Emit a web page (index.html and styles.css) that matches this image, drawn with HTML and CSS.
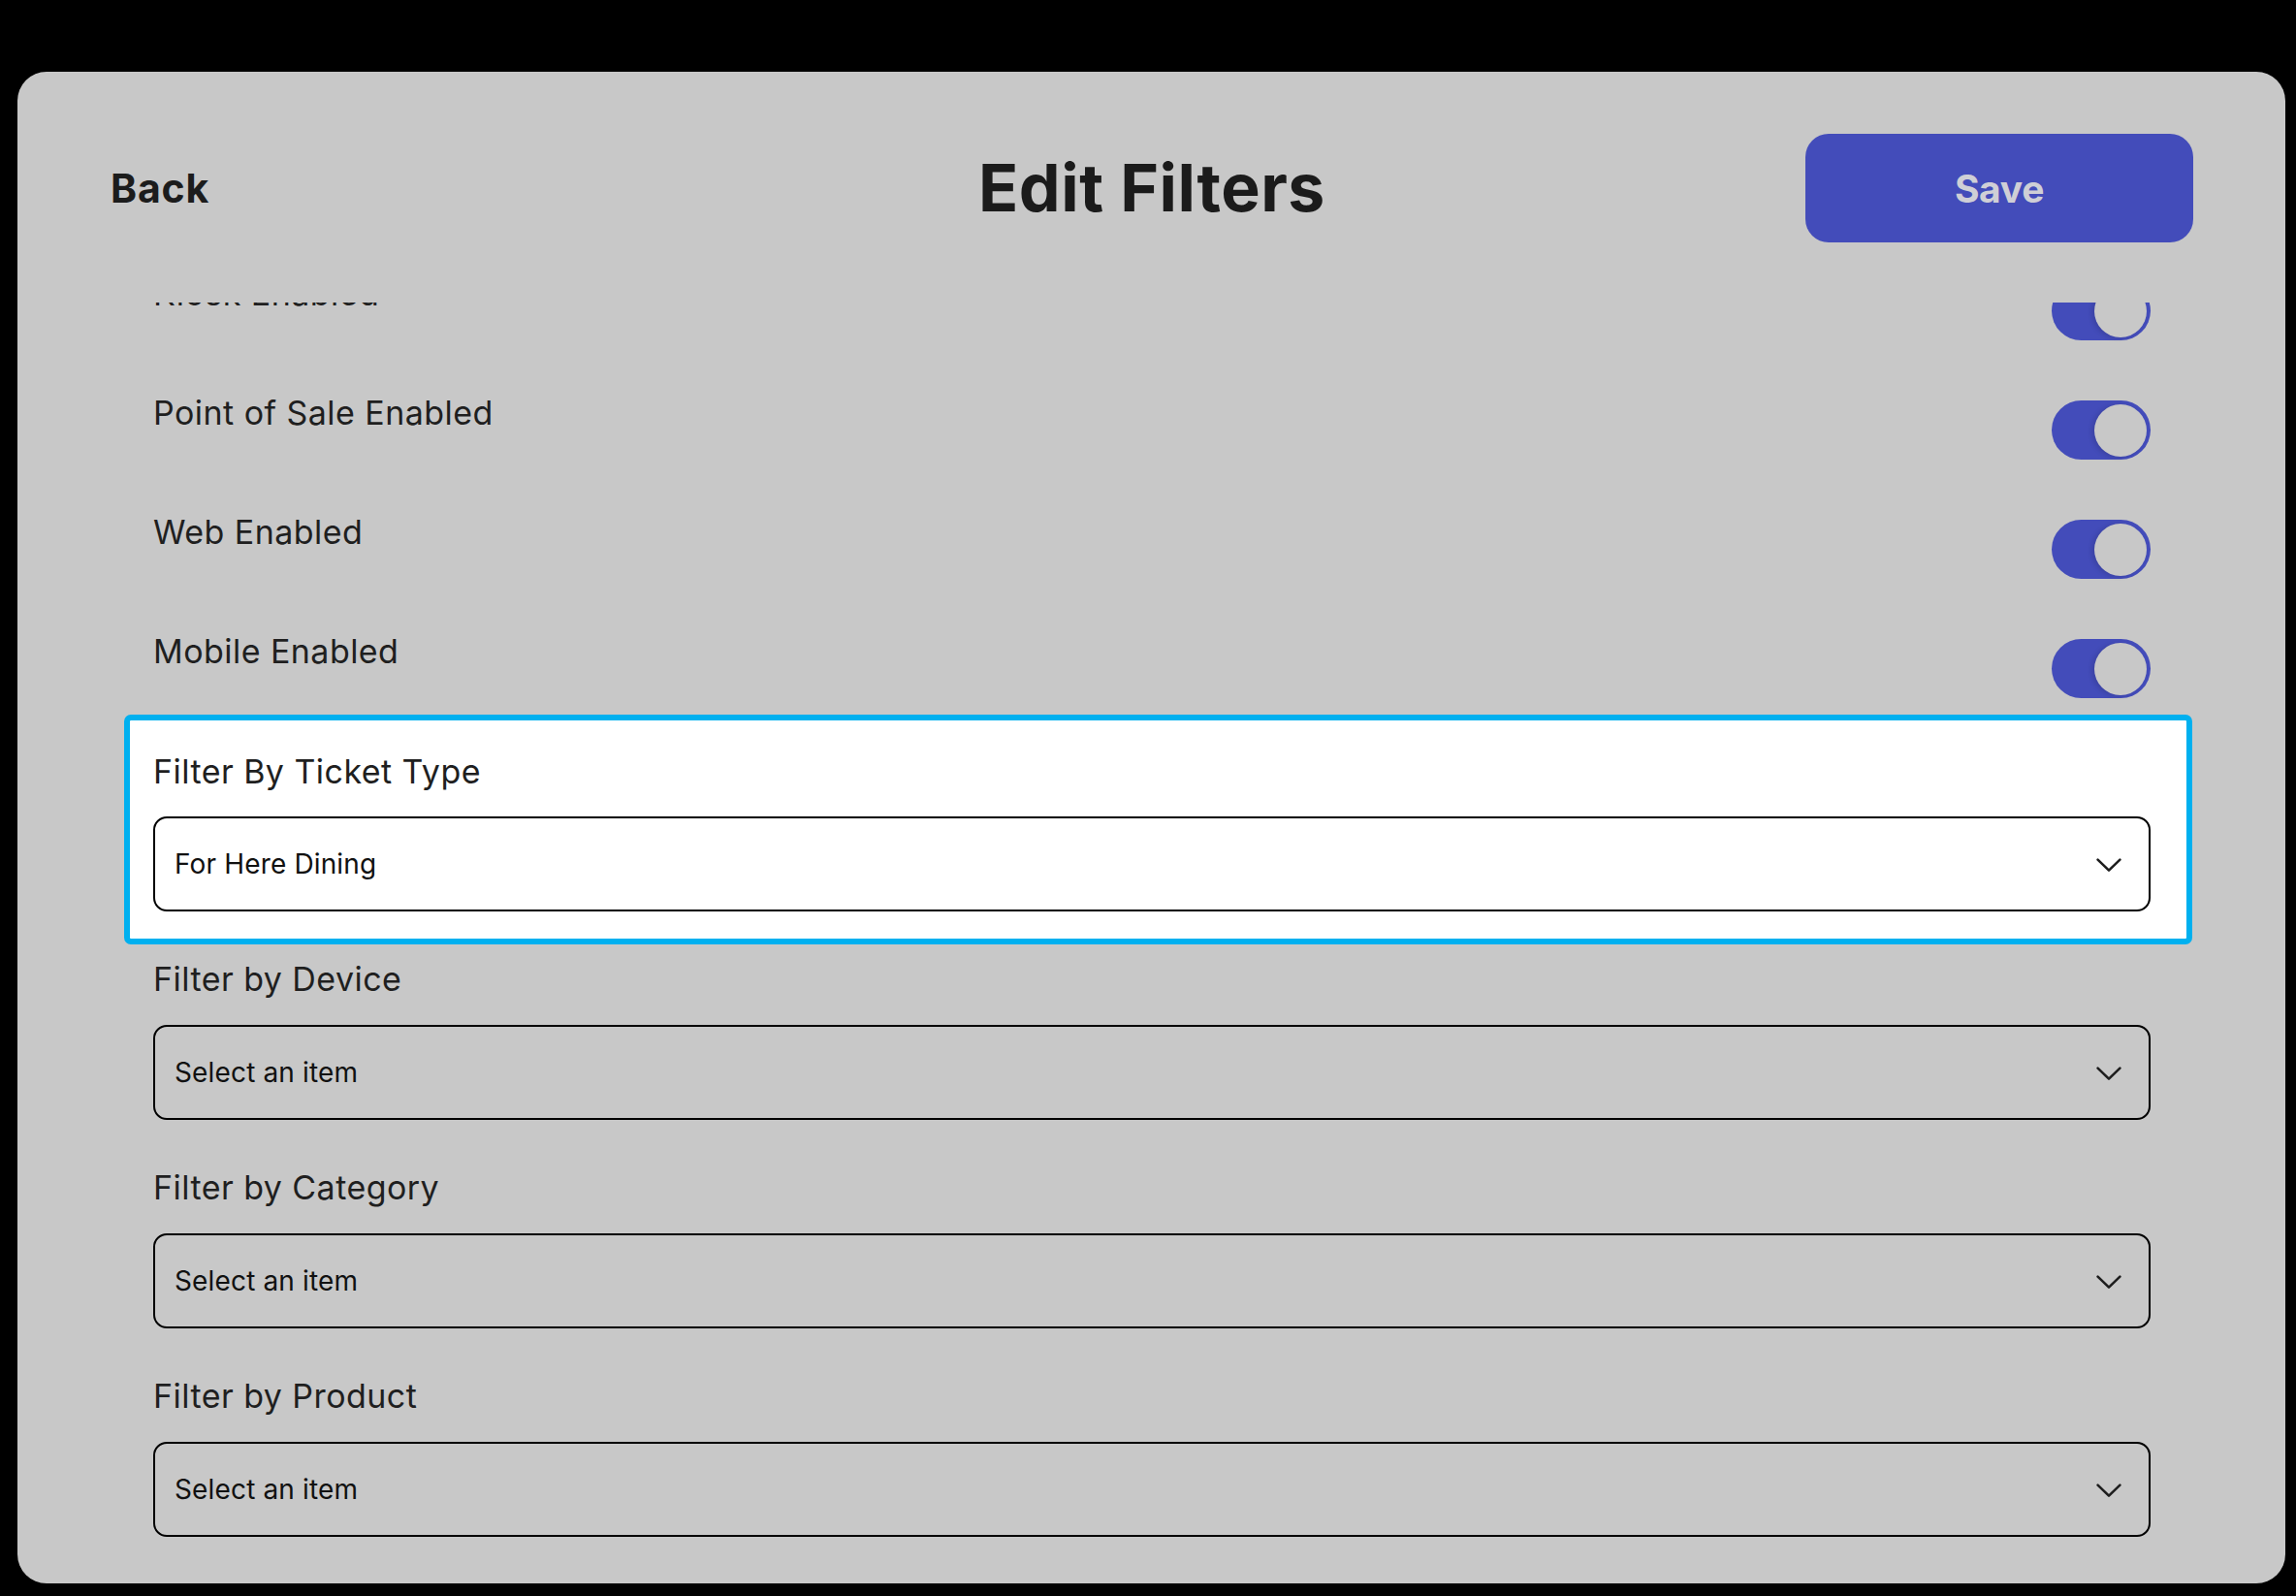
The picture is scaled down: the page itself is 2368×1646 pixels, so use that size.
FILE: index.html
```html
<!DOCTYPE html>
<html lang="en">
<head>
<meta charset="utf-8">
<title>Edit Filters</title>
<link rel="stylesheet" href="styles.css">
</head>
<body>
<div class="panel">
  <header class="header">
    <button class="back">Back</button>
    <h1 class="title">Edit Filters</h1>
    <button class="save">Save</button>
  </header>
  <div class="scroll">
    <div class="content">
      <div class="toggle-row">
        <span class="row-label">Kiosk Enabled</span>
        <span class="switch"><span class="knob"></span></span>
      </div>
      <div class="toggle-row">
        <span class="row-label">Point of Sale Enabled</span>
        <span class="switch"><span class="knob"></span></span>
      </div>
      <div class="toggle-row">
        <span class="row-label">Web Enabled</span>
        <span class="switch"><span class="knob"></span></span>
      </div>
      <div class="toggle-row toggle-row--last">
        <span class="row-label">Mobile Enabled</span>
        <span class="switch"><span class="knob"></span></span>
      </div>

      <div class="filter filter--active">
        <div class="filter-label">Filter By Ticket Type</div>
        <div class="select">
          <span class="select-text">For Here Dining</span>
          <svg class="chevron" viewBox="0 0 26 15" width="26" height="15"><path d="M1.6 1.6 L13 12.6 L24.4 1.6"/></svg>
        </div>
      </div>

      <div class="filter">
        <div class="filter-label">Filter by Device</div>
        <div class="select">
          <span class="select-text">Select an item</span>
          <svg class="chevron" viewBox="0 0 26 15" width="26" height="15"><path d="M1.6 1.6 L13 12.6 L24.4 1.6"/></svg>
        </div>
      </div>

      <div class="filter">
        <div class="filter-label">Filter by Category</div>
        <div class="select">
          <span class="select-text">Select an item</span>
          <svg class="chevron" viewBox="0 0 26 15" width="26" height="15"><path d="M1.6 1.6 L13 12.6 L24.4 1.6"/></svg>
        </div>
      </div>

      <div class="filter">
        <div class="filter-label">Filter by Product</div>
        <div class="select">
          <span class="select-text">Select an item</span>
          <svg class="chevron" viewBox="0 0 26 15" width="26" height="15"><path d="M1.6 1.6 L13 12.6 L24.4 1.6"/></svg>
        </div>
      </div>
    </div>
  </div>
</div>
</body>
</html>
```

FILE: styles.css
```css
* { box-sizing: border-box; }

html, body {
  margin: 0;
  padding: 0;
  background: #000;
  height: 100%;
}

body {
  font-family: "Inter", "Noto Sans", "Liberation Sans", sans-serif;
  color: #1e1e1e;
  overflow: hidden;
}

.panel {
  margin: 74px 11px 0 18px;
  height: 1559px;
  background: #c8c8c8;
  border-radius: 30px;
  overflow: hidden;
  display: flex;
  flex-direction: column;
  padding-top: 64px;
}

.header {
  display: grid;
  grid-template-columns: 1fr auto 1fr;
  align-items: center;
  height: 112px;
  padding: 0 95px 0 96px;
  flex: none;
}

.back {
  justify-self: start;
  background: none;
  border: 0;
  padding: 0;
  font-family: inherit;
  font-weight: 700;
  font-size: 41px;
  color: #1c1c1c;
  letter-spacing: 0.8px;
}

.title {
  margin: 0;
  font-weight: 700;
  font-size: 68px;
  letter-spacing: 0.5px;
  color: #1b1b1b;
  line-height: 1.2;
}

.save {
  justify-self: end;
  width: 400px;
  height: 112px;
  border: 0;
  border-radius: 24px;
  background: #434cba;
  color: #cfcfd6;
  font-family: inherit;
  font-weight: 700;
  font-size: 39px;
  letter-spacing: -0.3px;
}

.scroll {
  flex: 1;
  margin-top: 62px;
  overflow: hidden;
  padding: 0 139px 0 140px;
}

.content {
  margin-top: -30px;
}

.toggle-row {
  display: flex;
  justify-content: space-between;
  align-items: flex-start;
  margin-bottom: 54px;
}

.toggle-row--last {
  margin-bottom: 17px;
}

.row-label,
.filter-label {
  font-size: 34px;
  line-height: 41px;
  color: #1f1f1f;
  letter-spacing: 0.45px;
}

.switch {
  margin-top: 8px;
  width: 102px;
  height: 61px;
  border-radius: 31px;
  background: #434cba;
  display: flex;
  justify-content: flex-end;
  align-items: center;
  padding-right: 4px;
}

.knob {
  width: 54px;
  height: 54px;
  border-radius: 50%;
  background: #c8c8c8;
  box-shadow: -3px 1px 5px rgba(0, 0, 0, 0.12);
}

.filter {
  margin-bottom: 49px;
}

.filter--active {
  margin: 0 -43px 15px -30px;
  background: #fff;
  border: 6px solid #00b0ef;
  border-radius: 7px;
  padding: 32px 37px 28px 24px;
}

.filter-label {
  margin-bottom: 27px;
}

.filter--active .filter-label {
  margin-bottom: 26px;
}

.select {
  height: 98px;
  border: 2px solid #000;
  border-radius: 14px;
  display: flex;
  align-items: center;
  justify-content: space-between;
  padding: 0 28px 0 20px;
}

.select-text {
  font-size: 28px;
  color: #111;
  letter-spacing: 0.15px;
}

.chevron {
  display: block;
  margin-top: 2px;
}

.chevron path {
  fill: none;
  stroke: #1e1e1e;
  stroke-width: 2.6;
  stroke-linecap: round;
  stroke-linejoin: round;
}
```
